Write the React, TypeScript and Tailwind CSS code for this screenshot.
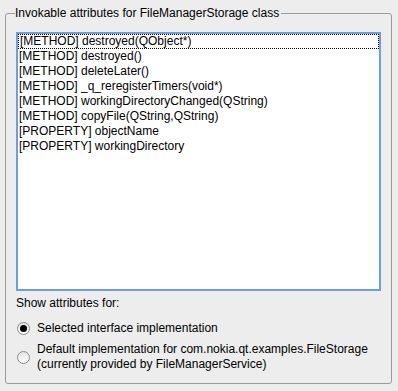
const items = [
  "[METHOD] destroyed(QObject*)",
  "[METHOD] destroyed()",
  "[METHOD] deleteLater()",
  "[METHOD] _q_reregisterTimers(void*)",
  "[METHOD] workingDirectoryChanged(QString)",
  "[METHOD] copyFile(QString,QString)",
  "[PROPERTY] objectName",
  "[PROPERTY] workingDirectory",
];

function Radio({ checked }: { checked?: boolean }) {
  return (
    <span className="flex h-[13px] w-[13px] shrink-0 items-center justify-center rounded-full border border-[#8c8c8c] bg-gradient-to-b from-[#e4e4e4] to-white">
      {checked && <span className="h-[7px] w-[7px] rounded-full bg-black" />}
    </span>
  );
}

export default function App() {
  return (
    <div
      className="h-[391px] w-[398px] bg-[#ededed] pl-[5px] pr-[6px] pt-[6px] text-[12px] leading-[15px] text-black"
      style={{ fontFamily: '"Liberation Sans", Arial, sans-serif' }}
    >
      <fieldset className="h-[378px] rounded-[3px] border border-[#9a9a9a] px-[10px] pb-2">
        <legend className="-ml-[1px] pr-[2px]">Invokable attributes for FileManagerStorage class</legend>

        <div className="mt-[11px] h-[259px] w-[365px] border-2 border-[#6f9ce2] bg-white">
          {items.map((item, i) => (
            <div
              key={item}
              className={`h-[15px] pl-[1px] whitespace-nowrap ${
                i === 0 ? "border border-dotted border-black pl-0 leading-[13px]" : ""
              }`}
            >
              {item}
            </div>
          ))}
        </div>

        <div className="mt-[5px]">Show attributes for:</div>

        <div className="mt-[10px] flex flex-col gap-[6px]">
          <label className="flex items-center gap-[7px] pl-[1px]">
            <Radio checked />
            <span>Selected interface implementation</span>
          </label>
          <label className="flex items-center gap-[7px] pl-[1px]">
            <Radio />
            <span>
              Default implementation for com.nokia.qt.examples.FileStorage
              <br />
              (currently provided by FileManagerService)
            </span>
          </label>
        </div>
      </fieldset>
    </div>
  );
}
